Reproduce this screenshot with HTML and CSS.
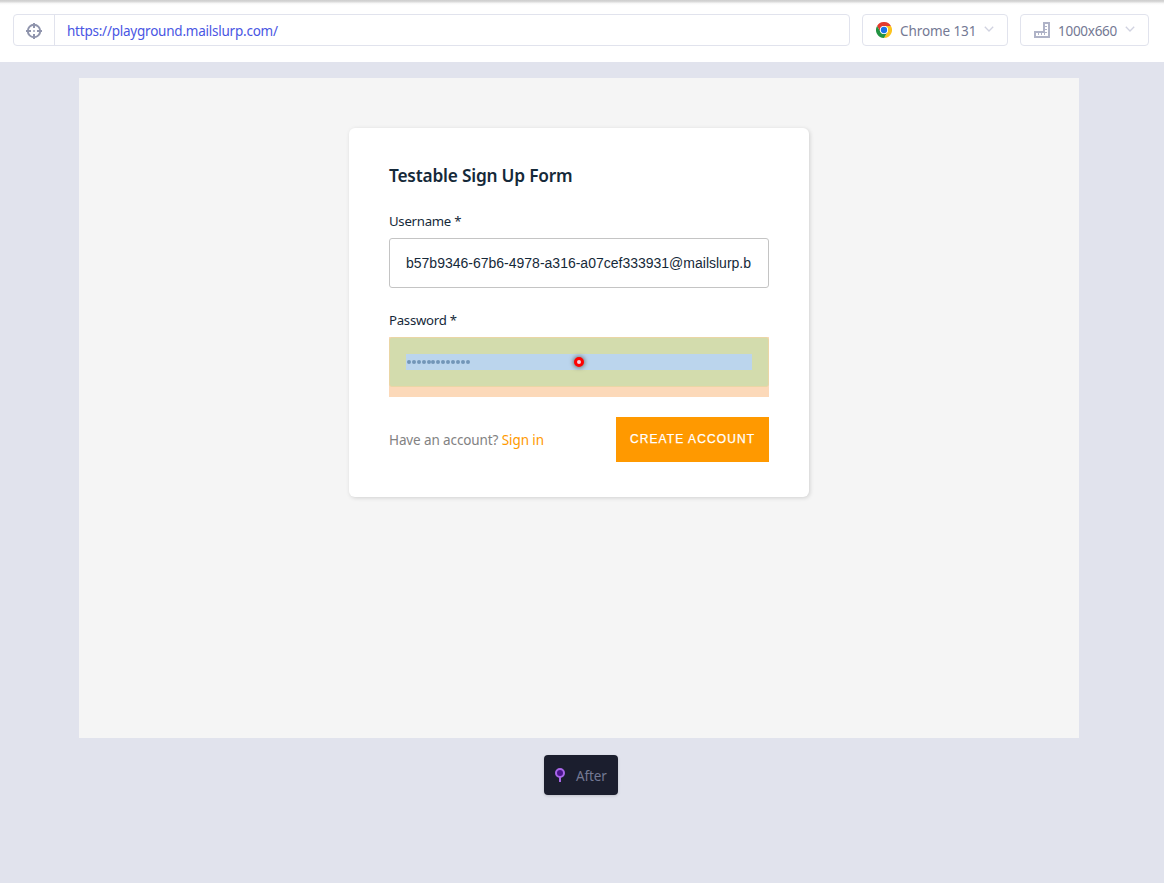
FILE: index.html
```html
<!DOCTYPE html>
<html lang="en">
<head>
<meta charset="utf-8">
<title>Playground preview</title>
<link rel="stylesheet" href="styles.css">
</head>
<body>
<header class="toolbar">
  <div class="address">
    <button class="picker" aria-label="Selector">
      <svg width="16" height="16" viewBox="0 0 16 16" fill="none" stroke="#9095ad" stroke-width="2"><circle cx="8" cy="8" r="6.2"/><path d="M8 0v5M8 11v5M0 8h5M11 8h5"/><path d="M7 8h2" stroke="#b4b8c9"/></svg>
    </button>
    <span class="url">https://playground.mailslurp.com/</span>
  </div>
  <div class="pill browser">
    <svg class="chrome" width="16" height="16" viewBox="0 0 48 48"><circle cx="24" cy="24" r="23.5" fill="#fff"/><path d="M3.2 12A24 24 0 0 1 44.8 12H24A12 12 0 0 0 13.6 30Z" fill="#e33b2e"/><path d="M44.8 12A24 24 0 0 1 24 48L34.4 30A12 12 0 0 0 24 12Z" fill="#fcc31e"/><path d="M24 48A24 24 0 0 1 3.2 12L13.6 30A12 12 0 0 0 34.4 30Z" fill="#229342"/><circle cx="24" cy="24" r="12" fill="#fff"/><circle cx="24" cy="24" r="9.5" fill="#1a73e8"/></svg>
    <span class="browser-name">Chrome 131</span>
    <svg class="chevron" width="10" height="6" viewBox="0 0 10 6" fill="none" stroke="#d0d2e0" stroke-width="1.300"><path d="M.8.8 5 5 9.200.8"/></svg>
  </div>
  <div class="pill size">
    <svg class="ruler" width="16" height="16" viewBox="0 0 16 16" fill="none" stroke="#afb3c7"><path stroke-width="2" d="M10 1h5v14H1v-5h9z"/><path d="M4.500 11v2M7.500 11v2M10.500 11v2M11 4.500h2M11 7.500h2M11 10.500h2"/></svg>
    <span class="size-name">1000x660</span>
    <svg class="chevron" width="10" height="6" viewBox="0 0 10 6" fill="none" stroke="#d0d2e0" stroke-width="1.300"><path d="M.8.8 5 5 9.200.8"/></svg>
  </div>
</header>
<main class="stage">
  <section class="viewport">
    <form class="card">
      <h1><span>Testable Sign Up Form</span></h1>
      <label>Username *</label>
      <div class="field">b57b9346-67b6-4978-a316-a07cef333931@mailslurp.b</div>
      <label>Password *</label>
      <div class="highlight">
        <div class="padding-box">
          <div class="content-box"><i></i><i></i><i></i><i></i><i></i><i></i><i></i><i></i><i></i><i></i><i></i><i></i><i></i><span class="hit"></span></div>
        </div>
      </div>
      <div class="actions">
        <span class="hint"><span class="question">Have an account?</span> <a>Sign in</a></span>
        <button class="create" type="button">CREATE ACCOUNT</button>
      </div>
    </form>
  </section>
  <div class="snapshot">
    <svg width="12" height="16" viewBox="0 0 12 16"><path d="M6 9v6" stroke="#a866e8" stroke-width="2"/><circle cx="6" cy="6" r="4" fill="#4a148c" stroke="#a866e8" stroke-width="2"/></svg>
    <span class="after">After</span>
  </div>
</main>
</body>
</html>
```
FILE: styles.css
```css
* { box-sizing: border-box; }
body { margin: 0; height: 883px; overflow: hidden; background: #e1e3ed; font: 14px/20px "Noto Sans", "Open Sans", sans-serif; color: #747994; }
span, label { white-space: nowrap; }
button { border: 0; padding: 0; background: none; }
.toolbar { height: 62px; padding: 14px 15px 0 13px; display: flex; gap: 12px; background: linear-gradient(#cdcdcd 0, #dcdcdc 2px, #f5f5f5 3px, #fff 5px); }
.address, .pill { height: 32px; border: 1px solid #e1e3ed; border-radius: 4px; display: flex; align-items: center; background: #fff; }
.address { flex: 1; }
.picker { width: 41px; height: 30px; border-right: 1px solid #e1e3ed; display: flex; align-items: center; justify-content: center; padding-top: 2px; }
.url { margin-left: 12px; color: #4956e3; font-size: 13.5px; letter-spacing: -.23px; padding-top: 2px; }
.pill { padding-left: 13px; padding-top: 2px; }
.pill svg { flex: none; margin-top: -3px; }
.browser { width: 146px; }
.size { width: 129px; }
.browser-name, .size-name { margin-left: 8px; font-size: 13.5px; letter-spacing: -.1px; width: 76px; }
.size-name { width: 59px; letter-spacing: -.28px; }
.pill .chevron { margin-left: 8px; margin-top: -4px; }
.stage { display: flex; flex-direction: column; align-items: center; padding: 16px 6px 0 0; }
.viewport { width: 1000px; height: 660px; background: #f5f5f5; padding-top: 50px; display: flex; justify-content: center; align-items: flex-start; }
.card { width: 460px; height: 369px; background: #fff; border-radius: 6px; padding: 36px 40px 0; box-shadow: 1px 1px 4px rgba(0,0,0,.15); color: #152939; }
h1 { margin: 0 0 23px; font-size: 17.300px; line-height: 24px; font-weight: 600; letter-spacing: -.2px; }
label { display: block; font-size: 13.200px; line-height: 20px; margin-bottom: 7px; letter-spacing: -.27px; }
.field { height: 50px; border: 1px solid #c4c4c4; border-radius: 3px; padding: 0 16px; font: 14px/48px "Liberation Sans", sans-serif; white-space: nowrap; margin-bottom: 22px; }
.highlight { height: 60px; background: #fcd9b9; }
.padding-box { height: 50px; border: 1px solid #ead6a5; border-radius: 3px; background: #d3dcad; padding: 16px; }
.content-box { height: 16px; background: #bbd5ed; display: flex; align-items: center; gap: .9px; padding-left: 1px; position: relative; }
.content-box i { width: 4px; height: 4px; border-radius: 50%; background: #7396b8; }
.hit { position: absolute; left: 168px; top: 3px; width: 10px; height: 10px; border: 3px solid #f00; border-radius: 50%; background: #f4cfdd; box-shadow: 0 0 4px 1px #777; }
.actions { margin-top: 20px; display: flex; justify-content: space-between; }
.hint { font-size: 13.500px; letter-spacing: -.11px; color: #828282; padding-top: 13px; }
.hint a { color: #f90; }
.create { width: 153px; height: 45px; background: #f90; color: #fff; font: 12px/16px "Liberation Sans", sans-serif; letter-spacing: 1.100px; padding-bottom: 1px; -webkit-text-stroke: .25px #fff; }
.snapshot { margin: 17px 0 0 4px; width: 74px; height: 40px; border-radius: 4px; background: #1b1e2e; display: flex; align-items: center; padding-left: 10px; gap: 10px; box-shadow: 0 1px 3px rgba(0,0,0,.15); font-size: 13.500px; letter-spacing: -.1px; }
.after { padding-top: 2px; }
```
